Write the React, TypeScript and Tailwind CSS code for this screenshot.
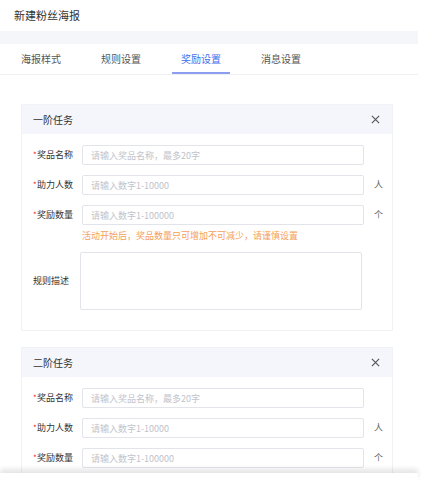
import React from "react";

const tabs = ["海报样式", "规则设置", "奖励设置", "消息设置"];

function Field({ label, placeholder, unit, required = true }: { label: string; placeholder: string; unit?: string; required?: boolean }) {
  return (
    <div className="flex items-center h-[20px]">
      <div className="w-[49px] flex items-center text-[9px] text-[#333]">
        {required && <span className="text-[#f5222d] text-[8px] w-[4px] leading-none">*</span>}
        <span>{label}</span>
      </div>
      <input
        className="w-[282px] h-[20px] border border-[#e2e4ea] rounded-[2px] pl-[8px] text-[9px] outline-none placeholder:text-[#c0c4cc]"
        placeholder={placeholder}
      />
      {unit && <span className="ml-[10px] text-[9px] text-[#666]">{unit}</span>}
    </div>
  );
}

function TaskCard({ title }: { title: string }) {
  return (
    <div className="w-[372px] border border-[#f0f2f6]">
      <div className="h-[29px] bg-[#f4f6fc] flex items-center justify-between pl-[11px] pr-[12px]">
        <span className="text-[10px] text-[#333]">{title}</span>
        <svg width="9" height="9" viewBox="0 0 10 10" className="text-[#555]">
          <path d="M1 1L9 9M9 1L1 9" stroke="currentColor" strokeWidth="1.3" fill="none" />
        </svg>
      </div>
      <div className="pt-[11px] pb-[20px] pl-[11px] flex flex-col gap-[10px]">
        <Field label="奖品名称" placeholder="请输入奖品名称，最多20字" />
        <Field label="助力人数" placeholder="请输入数字1-10000" unit="人" />
        <div className="flex flex-col">
          <Field label="奖励数量" placeholder="请输入数字1-100000" unit="个" />
          <div className="pl-[49px] mt-[5px] text-[9px] leading-[12px] text-[#f5a05a]">
            活动开始后，奖品数量只可增加不可减少，请谨慎设置
          </div>
        </div>
        <div className="flex items-center">
          <div className="w-[47px] text-[9px] text-[#333]">规则描述</div>
          <textarea className="w-[282px] h-[58px] border border-[#e2e4ea] rounded-[2px] resize-none outline-none" />
        </div>
      </div>
    </div>
  );
}

export default function App() {
  return (
    <div
      className="relative w-[435px] h-[482px] overflow-hidden bg-white"
      style={{ fontFamily: '"Noto Sans CJK SC", "Noto Sans", sans-serif' }}
    >
      <div className="w-[418px]">
        <div className="h-[31px] flex items-center pl-[14px] text-[11px] text-[#333]">新建粉丝海报</div>
        <div className="h-[13px] bg-[#f5f6fa]" />
        <div className="h-[31px] flex gap-[22px] pl-[12px] border-b border-[#eef0f4]">
          {tabs.map((t, i) => (
            <div
              key={t}
              className={
                i === 2
                  ? "px-[9px] flex items-center text-[10px] text-[#3f6ef0] border-b-2 border-[#8d9ef2]"
                  : "px-[9px] flex items-center text-[10px] text-[#555] border-b-2 border-transparent"
              }
            >
              {t}
            </div>
          ))}
        </div>
        <div className="pt-[29px] pl-[21px] flex flex-col gap-[16px]">
          <TaskCard title="一阶任务" />
          <TaskCard title="二阶任务" />
        </div>
      </div>
      <div className="absolute left-0 bottom-0 w-[418px] h-[9px] bg-white shadow-[0_-4px_5px_rgba(0,0,0,0.1)]" />
    </div>
  );
}
